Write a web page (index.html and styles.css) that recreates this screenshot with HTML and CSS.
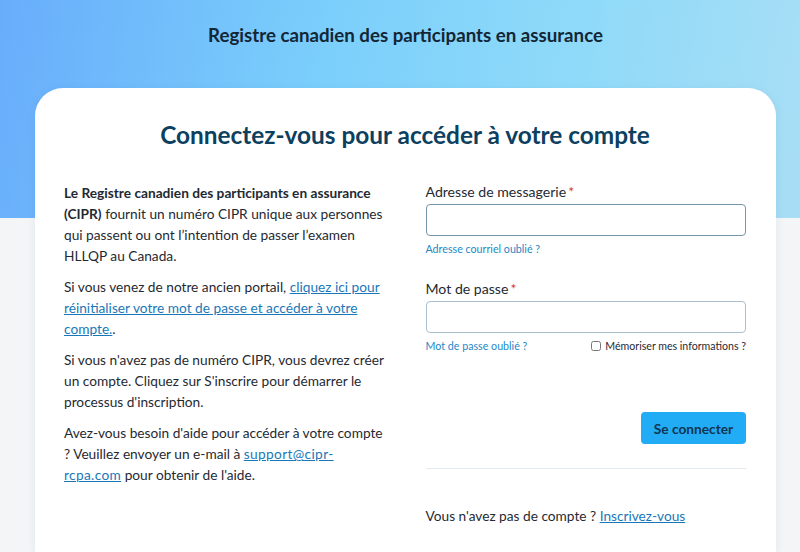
FILE: index.html
```html
<!DOCTYPE html>
<html lang="fr-CA">
  <head>
    <meta charset="utf-8">
    <title>Connexion - CIPR</title>
    <link rel="stylesheet" href="styles.css">
  </head>
  <body>
    <header class="site-header">Registre canadien des participants en assurance</header>
    <main class="card">
      <h1 class="card-title">Connectez-vous pour accéder à votre compte</h1>
      <div class="columns">
        <div class="intro">
          <p><strong>Le Registre canadien des participants en assurance (CIPR)</strong> fournit un numéro CIPR unique aux personnes qui passent ou ont l’intention de passer l’examen HLLQP au Canada.</p>
          <p>Si vous venez de notre ancien portail, <a href="#">cliquez ici pour réinitialiser votre mot de passe et accéder à votre compte.</a>.</p>
          <p>Si vous n'avez pas de numéro CIPR, vous devrez créer un compte. Cliquez sur S'inscrire pour démarrer le processus d'inscription.</p>
          <p>Avez-vous besoin d'aide pour accéder à votre compte ? Veuillez envoyer un e-mail à <a class="email" href="#">support@cipr-rcpa.com</a> pour obtenir de l'aide.</p>
        </div>
        <form class="login">
          <label class="field-label" for="email">Adresse de messagerie<span class="req">*</span></label>
          <input class="field" id="email" type="email">
          <a class="small-link" href="#">Adresse courriel oublié ?</a>

          <label class="field-label second" for="pwd">Mot de passe<span class="req">*</span></label>
          <input class="field" id="pwd" type="password">
          <div class="field-row">
            <a class="small-link" href="#">Mot de passe oublié ?</a>
            <label class="remember"><input type="checkbox"> Mémoriser mes informations ?</label>
          </div>

          <div class="actions">
            <button class="btn-primary" type="button">Se connecter</button>
          </div>
          <hr class="divider">
          <p class="signup">Vous n'avez pas de compte ? <a href="#">Inscrivez-vous</a></p>
        </form>
      </div>
    </main>
  </body>
</html>
```

FILE: styles.css
```css
body {
  margin: 0;
  font-family: Lato, "Noto Sans", sans-serif;
  color: #1f2a33;
  background-color: #f3f5f7;
  background-image: linear-gradient(100deg, #68adfb 0%, #7bcffb 40%, #8fdaf9 70%, #a8def5 100%);
  background-size: 100% 218px;
  background-repeat: no-repeat;
}

.site-header {
  width: 741px;
  margin-left: 35px;
  padding-top: 24px;
  height: 88px;
  box-sizing: border-box;
  text-align: center;
  font-size: 18.7px;
  line-height: 22px;
  font-weight: 700;
  color: #132636;
}

.card {
  display: block;
  width: 741px;
  margin-left: 35px;
  min-height: 464px;
  box-sizing: border-box;
  padding: 31px 30px 0 29px;
  background: #fff;
  border-radius: 28px 28px 0 0;
  box-shadow: 0 2px 10px rgba(40, 80, 120, 0.08);
}

.card-title {
  margin: 0;
  text-align: center;
  font-size: 24.4px;
  line-height: 32px;
  font-weight: 700;
  color: #0d3f5f;
}

.columns {
  display: grid;
  grid-template-columns: 1fr 1fr;
  column-gap: 41px;
  margin-top: 31px;
}

.intro {
  font-size: 13.7px;
  line-height: 21px;
}

.intro p {
  margin: 0 0 10px;
}

.intro strong {
  font-weight: 700;
}

a {
  color: #1a78b8;
}

.email {
  letter-spacing: 0.35px;
}

.login {
  display: flex;
  flex-direction: column;
}

.field-label {
  font-size: 14.1px;
  line-height: 20px;
  color: #1f2a33;
}

.field-label.second {
  margin-top: 23px;
}

.req {
  color: #d6363c;
  margin-left: 2px;
}

.field {
  margin-top: 2px;
  height: 32px;
  box-sizing: border-box;
  border: 1.5px solid #7896aa;
  border-radius: 4px;
  padding: 4px 8px;
  font: inherit;
}

#pwd {
  border-color: #a9c0cf;
  border-width: 1px;
}

.small-link {
  margin-top: 6px;
  font-size: 10.7px;
  line-height: 14px;
  color: #2588c6;
  text-decoration: none;
}

.field-row {
  display: flex;
  justify-content: space-between;
  align-items: center;
}

.remember {
  margin-top: 6px;
  display: flex;
  align-items: center;
  gap: 4px;
  font-size: 10.6px;
  line-height: 14px;
  color: #1f2a33;
}

.remember input {
  width: 10px;
  height: 10px;
  margin: 0;
}

.actions {
  display: flex;
  justify-content: flex-end;
  margin-top: 59px;
}

.btn-primary {
  width: 105px;
  height: 32px;
  border: 0;
  border-radius: 4px;
  background: #22acf6;
  color: #103550;
  font-family: inherit;
  font-size: 13.7px;
  font-weight: 700;
}

.divider {
  width: 100%;
  margin: 24px 0 0;
  border: 0;
  border-top: 1px solid #e2e9ef;
}

.signup {
  margin: 36px 0 0;
  font-size: 13.7px;
  line-height: 21px;
}
```
